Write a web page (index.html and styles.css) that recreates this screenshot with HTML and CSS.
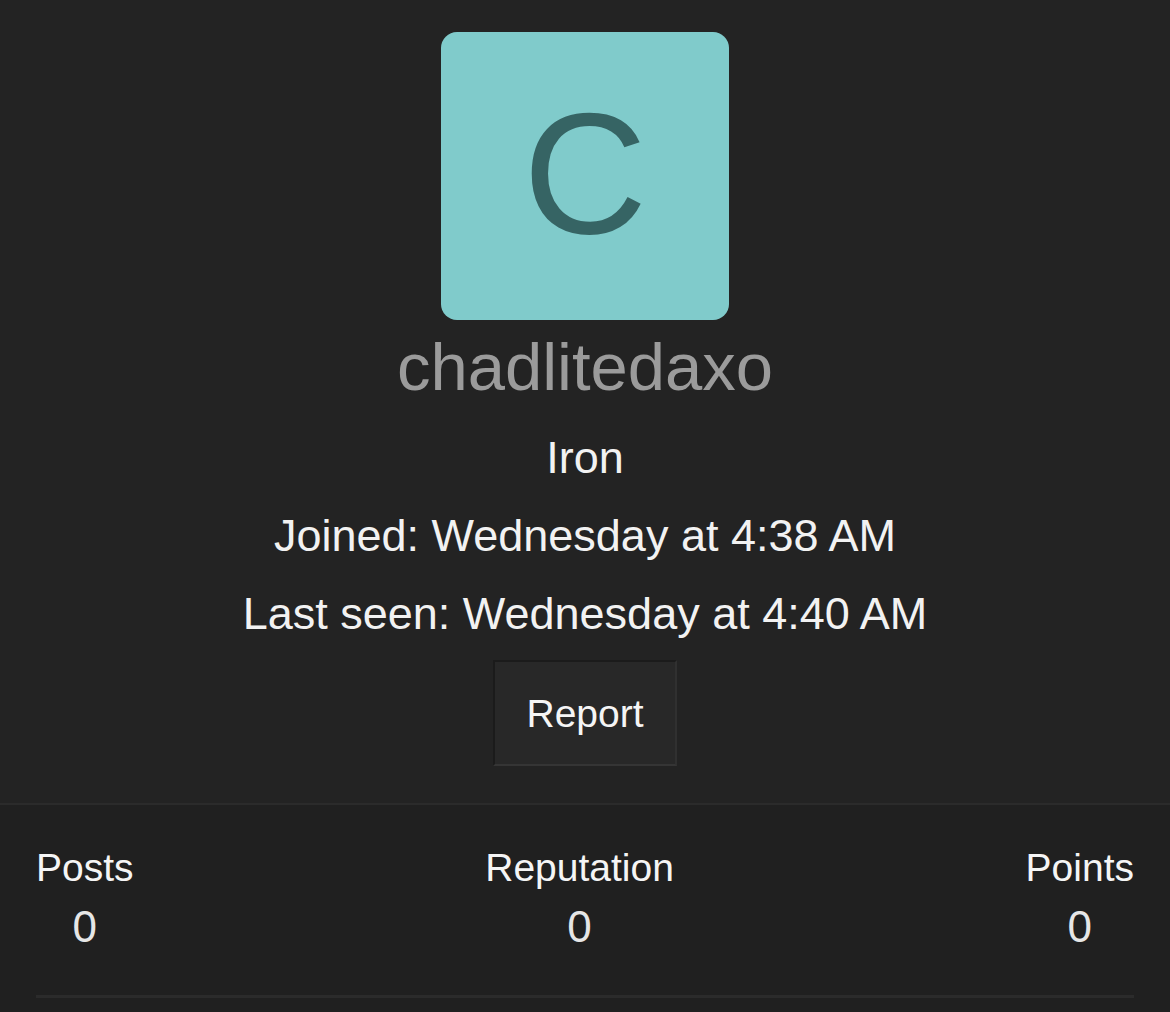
FILE: index.html
```html
<!DOCTYPE html>
<html lang="en">
<head>
<meta charset="utf-8">
<title>chadlitedaxo</title>
<link rel="stylesheet" href="styles.css">
</head>
<body>
<div class="profile">
  <div class="avatar"><span class="avatar-letter">C</span></div>
  <div class="username">chadlitedaxo</div>
  <div class="info">Iron</div>
  <div class="info">Joined: Wednesday at 4:38 AM</div>
  <div class="info">Last seen: Wednesday at 4:40 AM</div>
  <button class="report">Report</button>
</div>
<div class="stats-wrap">
  <div class="stats">
    <div class="stat">
      <div class="stat-label">Posts</div>
      <div class="stat-value">0</div>
    </div>
    <div class="stat">
      <div class="stat-label">Reputation</div>
      <div class="stat-value">0</div>
    </div>
    <div class="stat">
      <div class="stat-label">Points</div>
      <div class="stat-value">0</div>
    </div>
  </div>
</div>
</body>
</html>
```
FILE: styles.css
```css
html, body {
  margin: 0;
  padding: 0;
  background: #202020;
  font-family: "Liberation Sans", Arial, Helvetica, sans-serif;
  color: #f2f2f2;
}

.profile {
  background: #232323;
  display: flex;
  flex-direction: column;
  align-items: center;
  padding: 32px 0 37px;
  border-bottom: 2px solid #2b2b2b;
}

.avatar {
  width: 288px;
  height: 288px;
  border-radius: 16px;
  background: #80cbcb;
  display: flex;
  align-items: center;
  justify-content: center;
}

.avatar-letter {
  font-size: 172px;
  line-height: 1;
  color: #366464;
  margin-top: -6px;
}

.username {
  font-size: 67px;
  line-height: 94px;
  color: #9b9b9b;
  margin-bottom: 5px;
}

.info {
  font-size: 45px;
  line-height: 78px;
  color: #f2f2f2;
}

.report {
  margin-top: 7px;
  font-family: inherit;
  font-size: 39px;
  line-height: 44px;
  color: #f5f5f5;
  background: #282828;
  border: 2px solid;
  border-color: #1b1b1b #303030 #353535 #1b1b1b;
  padding: 30px 31px 28px;
  border-radius: 0;
}

.stats-wrap {
  padding: 0 36px;
}

.stats {
  display: flex;
  justify-content: space-between;
  padding: 41px 0 40px;
  border-bottom: 3px solid #2b2b2b;
}

.stat {
  text-align: center;
}

.stat-label {
  font-size: 39px;
  line-height: 44px;
  color: #f5f5f5;
}

.stat-value {
  font-size: 44px;
  line-height: 56px;
  margin-top: 9px;
  color: #e6e6e6;
}
```
